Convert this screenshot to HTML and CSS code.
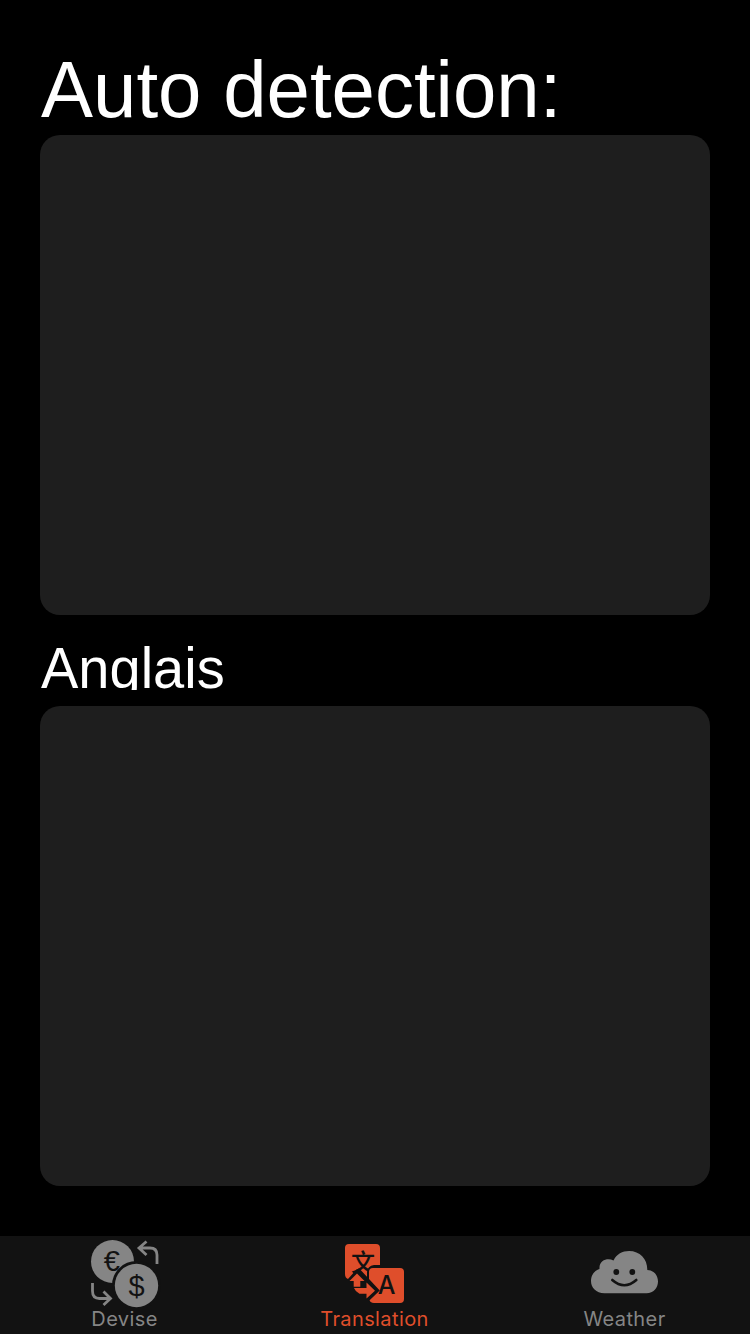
FILE: index.html
```html
<!DOCTYPE html>
<html lang="fr">
<head>
<meta charset="utf-8">
<title>Translation</title>
<link rel="stylesheet" href="styles.css">
</head>
<body>
<div class="screen">
  <main class="content">
    <h1 class="source-label"><span class="stretch">Auto detection:</span></h1>
    <div class="text-area"></div>
    <h2 class="target-label"><span class="stretch">Anglais</span></h2>
    <div class="text-area"></div>
  </main>
  <nav class="tabs">
    <a class="tab">
      <svg class="icon" width="80" height="70" viewBox="85 1238 80 70">
        <circle cx="112.500" cy="1261.500" r="21.500" fill="currentColor"/>
        <text class="coin" x="111.800" y="1271.300" font-size="29">€</text>
        <circle class="gap" cx="136.500" cy="1285.500" r="24.500"/>
        <circle cx="136.500" cy="1285.500" r="21.700" fill="currentColor"/>
        <text class="coin" x="136.500" y="1295.500" font-size="29">$</text>
        <g class="line" stroke-width="2.800">
          <path d="M157 1264V1255Q157 1248 150 1248H139M146.500 1241.500L139 1248L146.500 1255"/>
          <path d="M92.500 1283V1291Q92.500 1298.500 99.500 1298.500H110M103.500 1291.500L110.500 1298.500L103.500 1305"/>
        </g>
      </svg>
      <span class="name">Devise</span>
    </a>
    <a class="tab active">
      <svg class="icon" width="80" height="70" viewBox="335 1238 80 70">
        <path fill="currentColor" d="M349 1244H376Q380 1244 380 1248V1265H374Q367 1266 367 1273V1279L357 1269L348 1279Q345 1278 345 1274V1248Q345 1244 349 1244Z"/>
        <text class="han" x="363" y="1271" font-size="24">文</text>
        <path fill="currentColor" d="M373 1268H400Q404 1268 404 1272V1299Q404 1303 400 1303H374Q370 1303 369 1299L378 1290.500L369 1281V1272Q369 1268 373 1268Z"/>
        <path fill="currentColor" d="M357 1273.500L364.500 1281H360.300V1286.800H353.700V1281H349.500ZM354 1288H366.500V1282.500L375 1290.700L366.500 1298.500V1293.800H359.500Q355.500 1292 354 1288Z"/>
        <path class="cut" d="M358 1269L378 1290.500L368 1300"/>
        <text class="latin" x="386.500" y="1294" font-size="25">A</text>
      </svg>
      <span class="name">Translation</span>
    </a>
    <a class="tab">
      <svg class="icon" width="80" height="70" viewBox="585 1238 80 70">
        <path fill="currentColor" d="M604.500 1293.300C596 1293.300 591 1287.500 591 1281C591 1275 594.500 1270.500 599.500 1269C599 1262 604 1259.300 608.500 1259.300Q611 1259.300 613.500 1260.500C616.500 1254 622.500 1251 629 1251C640 1251 647.500 1259 647.300 1270C653.500 1270 658 1275 658 1281.500C658 1288 653.500 1293.300 646.500 1293.300Z"/>
        <circle class="gap" cx="616.300" cy="1272" r="2.900"/>
        <circle class="gap" cx="632.300" cy="1272" r="2.900"/>
        <path class="smile" d="M612.300 1280Q624.300 1290.500 636.300 1280"/>
      </svg>
      <span class="name">Weather</span>
    </a>
  </nav>
</div>
</body>
</html>
```
FILE: styles.css
```css
body { margin: 0; background: #000; }
.screen {
  display: flex;
  flex-direction: column;
  width: 750px;
  height: 1334px;
  overflow: hidden;
  background: #000;
  font-family: "Liberation Sans", Arial, sans-serif;
}
.content { flex: 1; padding: 45px 40px 0; }
.source-label, .target-label {
  margin: 0;
  padding-left: 1px;
  color: #fff;
  font-weight: 400;
  white-space: nowrap;
}
.source-label { height: 90px; font-size: 78px; line-height: 91px; }
.target-label {
  height: 45px;
  margin: 30px 0 16px;
  overflow: hidden;
  font-size: 56px;
  line-height: 47px;
}
.stretch { display: inline-block; transform: scaleY(1.015); transform-origin: 0 80%; }
.text-area { height: 480px; border-radius: 20px; background: #1e1e1e; }
.tabs { display: flex; height: 98px; background: #121212; }
.tab {
  display: flex;
  flex: 1;
  flex-direction: column;
  align-items: center;
  padding-top: 2px;
  color: #858585;
}
.active { color: #df4e2b; }
.icon { display: block; flex: none; }
.name {
  margin-right: 1px;
  font: 400 20px/22px Inter, sans-serif;
  letter-spacing: 0.400px;
  white-space: nowrap;
}
.coin, .latin, .han { fill: #121212; text-anchor: middle; }
.coin { font-family: "Liberation Sans", sans-serif; }
.latin { font-family: Inter, sans-serif; font-weight: 500; }
.han { font-family: "Noto Sans CJK SC", sans-serif; font-weight: 500; }
.gap { fill: #121212; }
.line { fill: none; stroke: currentColor; }
.cut { fill: none; stroke: #121212; stroke-width: 2.500; }
.smile { fill: none; stroke: #121212; stroke-width: 2.600; stroke-linecap: round; }
```
